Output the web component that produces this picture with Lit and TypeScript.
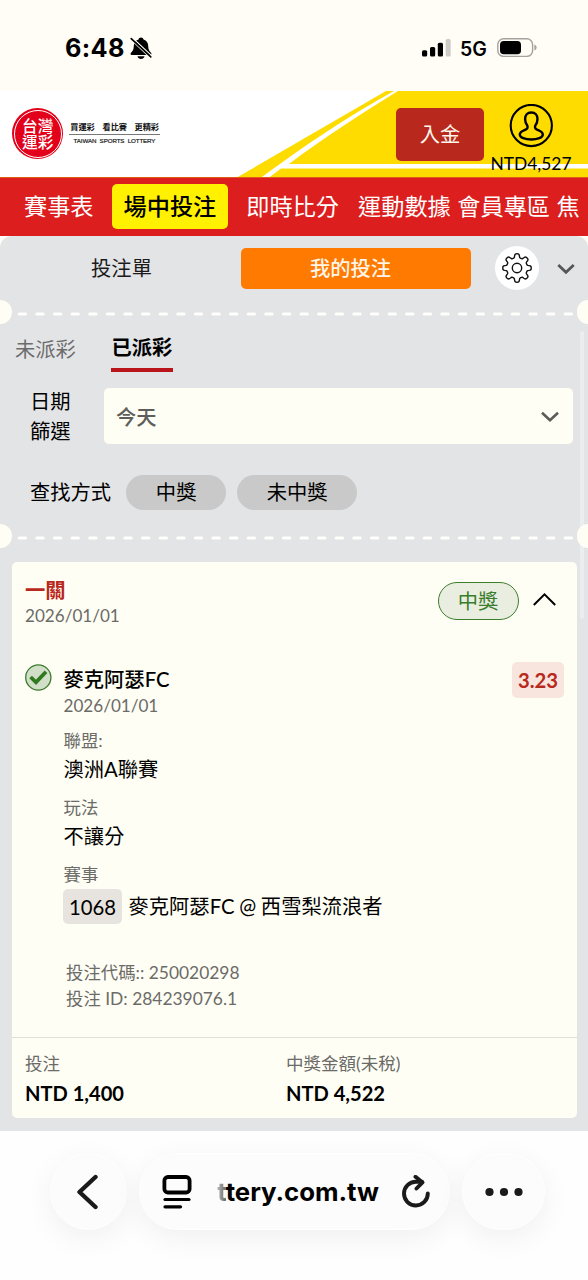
import { LitElement, html, css, svg } from "lit";
import { customElement } from "lit/decorators.js";

const GEAR = (() => {
  const pts: string[] = [];
  const teeth = 8;
  const n = 160;
  for (let i = 0; i < n; i++) {
    const a = (i / n) * Math.PI * 2;
    const w = Math.cos(a * teeth);
    const k = Math.tanh(w * 2.2) / Math.tanh(2.2);
    const r = 12.3 + 1.9 * k;
    pts.push(`${(15 + r * Math.sin(a)).toFixed(2)} ${(15 - r * Math.cos(a)).toFixed(2)}`);
  }
  return `M${pts.join("L")}Z`;
})();

@customElement("status-bar")
class StatusBar extends LitElement {
  static styles = css`
    :host { display: flex; height: 91px; box-sizing: border-box; padding: 0 50px 0 65px; align-items: flex-start;
      background: #fffdf6; color: #000; font-family: Inter, "Liberation Sans", sans-serif; }
    .time { font-size: 25.300px; font-weight: 700; line-height: 30px; margin-top: 33px; letter-spacing: 0.300px; width: 60px; white-space: nowrap; }
    .bell { margin: 37px 0 0 5px; }
    .spacer { flex: 1; }
    .bars { margin-top: 39px; }
    .net { font-size: 19.500px; font-weight: 600; line-height: 24px; margin: 37px 0 0 9px; width: 28px; white-space: nowrap; }
    .battery { margin: 38px 0 0 9px; }
    svg { display: block; flex: none; }
  `;
  render() {
    return html`
      <span class="time">6:48</span>
      <svg class="bell" width="22" height="23" viewBox="0 0 22 23">
        <path d="M11 .5c-1.400 0-2.300.9-2.500 2C5.300 3.500 3.900 6 3.800 9c-.1 3.800-1.200 5.200-2.800 6.800-.9 1-.4 2.200.8 2.200h18.400c1.200 0 1.700-1.200.8-2.200-1.600-1.600-2.700-3-2.800-6.800-.1-3-1.500-5.500-4.700-6.500C13.300 1.400 12.400.5 11 .5z"/>
        <path d="M7.500 19.300h7c-.4 1.700-1.700 2.700-3.500 2.700s-3.100-1-3.500-2.700z"/>
        <path d="M.8 2.300 20.500 20.700" stroke="#fffdf6" stroke-width="1.500"/>
        <path d="M2 .5 22 19" stroke="#fffdf6" stroke-width="1.200"/>
        <path d="M1.200 1.600 20.800 19.900" stroke="#000" stroke-width="1.600" stroke-linecap="round"/>
      </svg>
      <span class="spacer"></span>
      <svg class="bars" width="29" height="18" viewBox="0 0 29 18">
        <rect x="0" y="11.300" width="5.200" height="6.200" rx="1.500"/>
        <rect x="8" y="8" width="5.200" height="9.500" rx="1.500"/>
        <rect x="15.800" y="3.700" width="5.200" height="13.800" rx="1.500"/>
        <rect x="23.700" y="0" width="5" height="17.500" rx="1.500" fill="#cdccc7"/>
      </svg>
      <span class="net">5G</span>
      <svg class="battery" width="41" height="20" viewBox="0 0 41 20">
        <rect x=".8" y=".8" width="34.800" height="17.600" rx="5.800" fill="none" stroke="#a3a29e" stroke-width="1.400"/>
        <rect x="3" y="3" width="21" height="13.200" rx="3.800"/>
        <path d="M37.400 6.600c1.400.5 2.200 1.600 2.200 3s-.8 2.500-2.200 3z" fill="#a3a29e"/>
      </svg>`;
  }
}

@customElement("brand-header")
class BrandHeader extends LitElement {
  static styles = css`
    :host { display: flex; position: relative; height: 87px; background: #fff; font-family: Lato, "Noto Sans CJK TC", sans-serif; }
    .art { position: absolute; inset: 0; }
    svg { display: block; }
    .row { position: relative; display: flex; flex: 1; align-items: flex-start; }
    .seal { box-sizing: border-box; width: 51px; height: 51px; margin: 17px 0 0 12px; border-radius: 50%; background: #e2001a; flex: none; padding: 1.500px; }
    .ring { box-sizing: border-box; width: 48px; height: 48px; border: 1px solid #fff; border-radius: 50%; padding: 7.500px 7px 0 7.500px; color: #fff;
      font-family: "Noto Sans CJK TC", sans-serif; font-size: 15.700px; font-weight: 500; line-height: 15.700px; }
    .logo { margin: 17px 0 0 6px; flex: none; }
    .spacer { flex: 1; }
    .deposit { margin-top: 17px; width: 88px; height: 53px; border-radius: 5px; background: #b9281c; color: #fff8ee;
      font-size: 20.300px; line-height: 53px; text-align: center; }
    .account { display: flex; flex-direction: column; align-items: center; width: 84px; margin: 13px 15px 0 5px; color: #000; }
    .balance { font-size: 17.400px; line-height: 20px; margin-top: 6px; white-space: nowrap; }
  `;
  render() {
    return html`
      <svg class="art" width="588" height="87" viewBox="0 0 588 87">
        <path d="M236 87 386 0H588V87z" fill="#fedc00"/>
        <path d="M260.500 87C304 55 345 27 394 0H398C362 22 322 48 289 73H588V77.500H281L268.500 87z" fill="#fff"/>
        <path d="M0 86.500H588" stroke="#e05a18" stroke-width="1"/>
      </svg>
      <div class="row">
        <div class="seal"><div class="ring">台灣運彩</div></div>
        <svg class="logo" width="92" height="53" viewBox="57 0 92 53">
          <g fill="#111" font-family="Noto Sans CJK TC, sans-serif" font-weight="700" font-size="8.200">
            <text x="58.300" y="22" textLength="24.500">買運彩</text>
            <text x="90.500" y="22" textLength="24.500">看比賽</text>
            <text x="122.500" y="22" textLength="24.500">更精彩</text>
          </g>
          <path d="M57 26.500H148" stroke="#555" stroke-width=".8"/>
          <text x="61.500" y="34.500" fill="#222" stroke="#222" stroke-width=".2" font-family="Liberation Sans, sans-serif" font-size="6.200" textLength="82">TAIWAN&#160; SPORTS&#160; LOTTERY</text>
        </svg>
        <span class="spacer"></span>
        <div class="deposit">入金</div>
        <div class="account">
          <svg width="44" height="44" viewBox="0 0 44 44" fill="none" stroke="#000">
            <circle cx="22.300" cy="21.500" r="20.600" stroke-width="2.100"/>
            <path d="M22 9.500c-4 0-6.200 2.800-6.200 6.500 0 3 .9 4.600 2 6.200.8 1.300.7 3.300-.8 4.100-2.500 1.300-6.500 2-6.500 5.200 0 3.300 5.500 5 11.500 5s11.500-1.700 11.500-5c0-3.200-4-3.900-6.500-5.200-1.500-.8-1.600-2.800-.8-4.100 1.100-1.600 2-3.200 2-6.200 0-3.700-2.200-6.500-6.200-6.500z" transform="translate(.3 -1)" stroke-width="2.400"/>
          </svg>
          <span class="balance">NTD4,527</span>
        </div>
      </div>`;
  }
}

@customElement("main-nav")
class MainNav extends LitElement {
  static styles = css`
    :host { display: flex; align-items: flex-start; height: 58px; box-sizing: border-box; padding: 6px 0 0 24px; background: #dc1e1e; color: #fff;
      font-family: Lato, "Noto Sans CJK TC", sans-serif; font-size: 23.200px; line-height: 45px; white-space: nowrap; overflow: hidden; }
    .item { margin-right: 6.500px; flex: none; }
    .wide { margin-right: 18px; }
    .score { margin-right: 19px; }
    .active { background: #fff100; color: #000; font-weight: 500; border-radius: 5px; height: 45px; padding: 0 12px; margin-right: 18px; }
  `;
  render() {
    return html`<span class="item wide">賽事表</span><span class="item active">場中投注</span><span class="item score">即時比分</span><span class="item">運動數據</span><span class="item">會員專區</span><span class="item">焦</span>`;
  }
}

@customElement("ticket-divider")
class TicketDivider extends LitElement {
  static styles = css`
    :host { display: flex; height: 24px; align-items: center; position: relative; z-index: 1; }
    .left, .right { width: 12px; height: 24px; background: #fffef5; border-radius: 0 12px 12px 0; }
    .right { width: 11px; border-radius: 12px 0 0 12px; }
    .dash { flex: 1; display: block; margin-top: 3px; }
  `;
  render() {
    return html`<div class="left"></div>
      <svg class="dash" height="4" viewBox="0 0 565 4" preserveAspectRatio="none"><path d="M7.200 1.900H561" stroke="#fffefb" stroke-width="3" stroke-linecap="round" stroke-dasharray="6.400 11.210"/></svg>
      <div class="right"></div>`;
  }
}

@customElement("bet-card")
class BetCard extends LitElement {
  static styles = css`
    :host { display: block; margin: 14px 11px 0 12px; height: 556px; background: #fffef5; border-radius: 5px; color: #000; font-size: 20.300px; }
    .head { display: flex; height: 75px; padding: 0 20px 0 13px; align-items: flex-start; box-sizing: border-box; }
    .title { flex: 1; padding-top: 14px; }
    .legs { color: #b9281c; font-weight: 700; line-height: 28px; }
    .small { color: #6b6b68; font-size: 17.400px; line-height: 24px; }
    .day { font-size: 17.100px; line-height: 24px; }
    .won { box-sizing: border-box; width: 81px; height: 38px; margin: 20px 13.500px 0 0; border: 1.500px solid #3c7f2d; border-radius: 19px;
      background: #e9eee0; color: #3a7d2c; text-align: center; line-height: 36px; }
    .caret { margin-top: 29px; display: block; }
    .leg { display: grid; grid-template-columns: 38.500px 1fr auto; padding: 25px 13px 0; }
    .tick { display: block; margin-top: 2px; }
    .team { font-weight: 500; line-height: 30px; height: 30px; padding-top: 2px; box-sizing: border-box; }
    .date { margin-top: 2px; }
    .field { margin-top: 11px; }
    .value { line-height: 32px; }
    .odds { width: 52px; height: 36px; border-radius: 5px; background: #f7e5de; color: #b9281c; font-weight: 700; text-align: center; line-height: 37px; }
    .match { display: flex; align-items: center; height: 35px; white-space: pre; margin-top: 2px; margin-left: -0.500px; }
    .num { width: 59px; height: 35px; margin-right: 6.500px; border-radius: 5px; background: #e7e4df; text-align: center; line-height: 36px; }
    .at { word-spacing: -0.500px; line-height: 35px; }
    .codes { padding: 36px 0 0 2.500px; }
    .codes .small { line-height: 26px; }
    .totals { display: grid; grid-template-columns: 261px 1fr; border-top: 1px solid #e0dfd8; margin-top: 25px; padding: 14px 13px 0; }
    .sum { font-weight: 700; line-height: 29px; margin-top: 3px; font-size: 20.100px; }
    .totals .small { font-size: 17.500px; }
  `;
  render() {
    return html`
      <div class="head">
        <div class="title"><div class="legs">一關</div><div class="small day">2026/01/01</div></div>
        <div class="won">中獎</div>
        <svg class="caret" width="25" height="16" viewBox="0 0 25 16" fill="none" stroke="#000" stroke-width="2"><path d="M1.800 14 12.500 3.300 23.200 14"/></svg>
      </div>
      <div class="leg">
        <svg class="tick" width="27" height="27" viewBox="0 0 27 27"><circle cx="13.300" cy="13.500" r="12.600" fill="#d2dfc8" stroke="#3b7a2b" stroke-width="1.300"/><path d="M5.600 13 11 18.300 21 7.800" fill="none" stroke="#2f7a1e" stroke-width="3.800"/></svg>
        <div>
          <div class="team">麥克阿瑟FC</div>
          <div class="small day date">2026/01/01</div>
          <div class="field"><div class="small">聯盟:</div><div class="value">澳洲A聯賽</div></div>
          <div class="field"><div class="small">玩法</div><div class="value">不讓分</div></div>
          <div class="field"><div class="small">賽事</div><div class="match"><span class="num">1068</span><span class="at">麥克阿瑟FC @ 西雪梨流浪者</span></div></div>
          <div class="codes"><div class="small">投注代碼:: 250020298</div><div class="small">投注 ID: 284239076.1</div></div>
        </div>
        <div class="odds">3.23</div>
      </div>
      <div class="totals">
        <div><div class="small">投注</div><div class="sum">NTD 1,400</div></div>
        <div><div class="small">中獎金額(未稅)</div><div class="sum">NTD 4,522</div></div>
      </div>`;
  }
}

@customElement("bet-panel")
class BetPanel extends LitElement {
  static styles = css`
    :host { display: block; position: relative; box-sizing: border-box; height: 895px; background: #e3e4e6; border-radius: 12px 12px 0 0; color: #000;
      font-family: Lato, "Noto Sans CJK TC", sans-serif; font-size: 20.300px; }
    .tabs { display: flex; height: 64px; align-items: center; }
    .slip { width: 241px; text-align: center; color: #1b1b1b; box-sizing: border-box; padding: 0 0 2px 2px; }
    .mine { width: 230px; height: 41px; border-radius: 5px; background: #ff7a00; color: #fff5e8; font-weight: 500; text-align: center; line-height: 41px; margin-right: 24px; box-sizing: border-box; padding-right: 11px; }
    .gear { width: 44px; height: 44px; border-radius: 50%; background: #fff; display: grid; place-items: center; margin-right: 18px; }
    svg { display: block; }
    .chev { margin-top: 2px; }
    .sub { display: flex; height: 48px; padding-left: 15px; align-items: flex-start; }
    .pending { width: 61px; color: #6c6c6c; line-height: 29px; margin: 11px 35px 0 0; }
    .settled { font-weight: 700; line-height: 27px; height: 38px; margin-top: 10px; border-bottom: 4px solid #b8141a; box-sizing: border-box; width: 62px; padding-left: 0.500px; white-space: nowrap; }
    .filter { display: flex; margin-top: 16px; height: 56px; padding-right: 15px; }
    .label { width: 74px; padding-left: 30px; line-height: 29.500px; margin-top: -1px; box-sizing: border-box; margin-right: 30px; }
    .label span { display: block; }
    .select { flex: 1; display: flex; align-items: center; background: #fffef5; border-radius: 5px; color: #5e5e5a; font-weight: 500; padding: 0 13px 0 12px; justify-content: space-between; }
    .find { display: flex; align-items: center; height: 36px; padding: 30px 0 14px 30px; }
    .find .how { padding-bottom: 2px; }
    .chip { height: 35px; border-radius: 18px; background: #c9c9c9; line-height: 35px; text-align: center; width: 100px; margin-left: 15px; }
    .chip.long { width: 120px; margin-left: 11px; }
    .thumb { position: absolute; right: 4px; top: 95px; width: 4px; height: 288px; border-radius: 2px; background: #ecedef; }
  `;
  render() {
    return html`
      <div class="tabs">
        <div class="slip">投注單</div>
        <div class="mine">我的投注</div>
        <div class="gear"><svg width="30" height="30" viewBox="0 0 30 30" fill="none" stroke="#111" stroke-width="1.400">${svg`<path d=${GEAR} stroke-linejoin="round"/>`}<circle cx="15" cy="15" r="4.700"/></svg></div>
        <svg class="chev" width="18" height="12" viewBox="0 0 18 12" fill="none" stroke="#55565a" stroke-width="2.800"><path d="M1.300 2 9 9.300 16.700 2"/></svg>
      </div>
      <ticket-divider></ticket-divider>
      <div class="sub"><div class="pending">未派彩</div><div class="settled">已派彩</div></div>
      <div class="filter">
        <div class="label"><span>日期</span><span>篩選</span></div>
        <div class="select"><span>今天</span><svg width="20" height="12" viewBox="0 0 20 12" fill="none" stroke="#5a5a56" stroke-width="2.600"><path d="M2 2.800 10 10.200 18 2.800"/></svg></div>
      </div>
      <div class="find"><span class="how">查找方式</span><span class="chip">中獎</span><span class="chip long">未中獎</span></div>
      <ticket-divider></ticket-divider>
      <bet-card></bet-card>
      <div class="thumb"></div>`;
  }
}

@customElement("browser-bar")
class BrowserBar extends LitElement {
  static styles = css`
    :host { display: flex; box-sizing: border-box; height: 149px; padding: 22px 43px 0 50px; gap: 12px; align-items: flex-start; background: #fefefe; }
    .pill { height: 77px; box-sizing: border-box; border-radius: 39px; background: #fcfcfc; border: 1px solid #fff; box-shadow: 0 8px 30px rgba(0, 0, 0, 0.06); display: flex; align-items: center; }
    .back { width: 77px; justify-content: center; }
    .back svg { margin-right: 4px; }
    .url { flex: 1; padding: 0 19px 0 22px; }
    .more { width: 83px; justify-content: center; }
    .host { flex: 1; text-align: center; font-family: Inter, "Liberation Sans", sans-serif; font-weight: 700; font-size: 25.800px; letter-spacing: -0.050px; line-height: 32px; color: #000; white-space: nowrap; padding: 1px 0 0 2px; }
    .fade { background: linear-gradient(90deg, #bbb, #666); -webkit-background-clip: text; color: transparent; }
    svg { display: block; flex: none; }
  `;
  render() {
    return html`
      <div class="pill back"><svg width="24" height="36" viewBox="0 0 24 36" fill="none" stroke="#1a1a1a" stroke-width="4.400" stroke-linecap="round" stroke-linejoin="round"><path d="M20.500 3 4.500 18 20.500 33"/></svg></div>
      <div class="pill url">
        <svg width="30" height="34" viewBox="0 0 30 34" fill="none" stroke="#000" stroke-linecap="round"><rect x="2.400" y="2" width="25.200" height="15.500" rx="3.500" stroke-width="3.800"/><path d="M3 24.500H27" stroke-width="3.200"/><path d="M3 31.800H18.500" stroke-width="3.200"/></svg>
        <span class="host"><span class="fade">t</span>tery.com.tw</span>
        <svg width="28" height="34" viewBox="0 0 28 34" fill="none" stroke="#1a1a1a" stroke-width="3.900" stroke-linecap="round" stroke-linejoin="round"><path d="M25.800 18.500A11.900 11.900 0 1 1 14 6.700H20"/><path d="M13.500 1.800 20.500 7.400 14.500 13.500"/></svg>
      </div>
      <div class="pill more"><svg width="38" height="10" viewBox="0 0 38 10" fill="#1a1a1a"><circle cx="4.500" cy="5" r="4.100"/><circle cx="19" cy="5" r="4.100"/><circle cx="33.500" cy="5" r="4.100"/></svg></div>`;
  }
}

@customElement("app-root")
class AppRoot extends LitElement {
  static styles = css`
    :host { display: flex; flex-direction: column; width: 588px; height: 1280px; overflow: hidden; background: #fffdf6; }
  `;
  render() {
    return html`<status-bar></status-bar><brand-header></brand-header><main-nav></main-nav><bet-panel></bet-panel><browser-bar></browser-bar>`;
  }
}
